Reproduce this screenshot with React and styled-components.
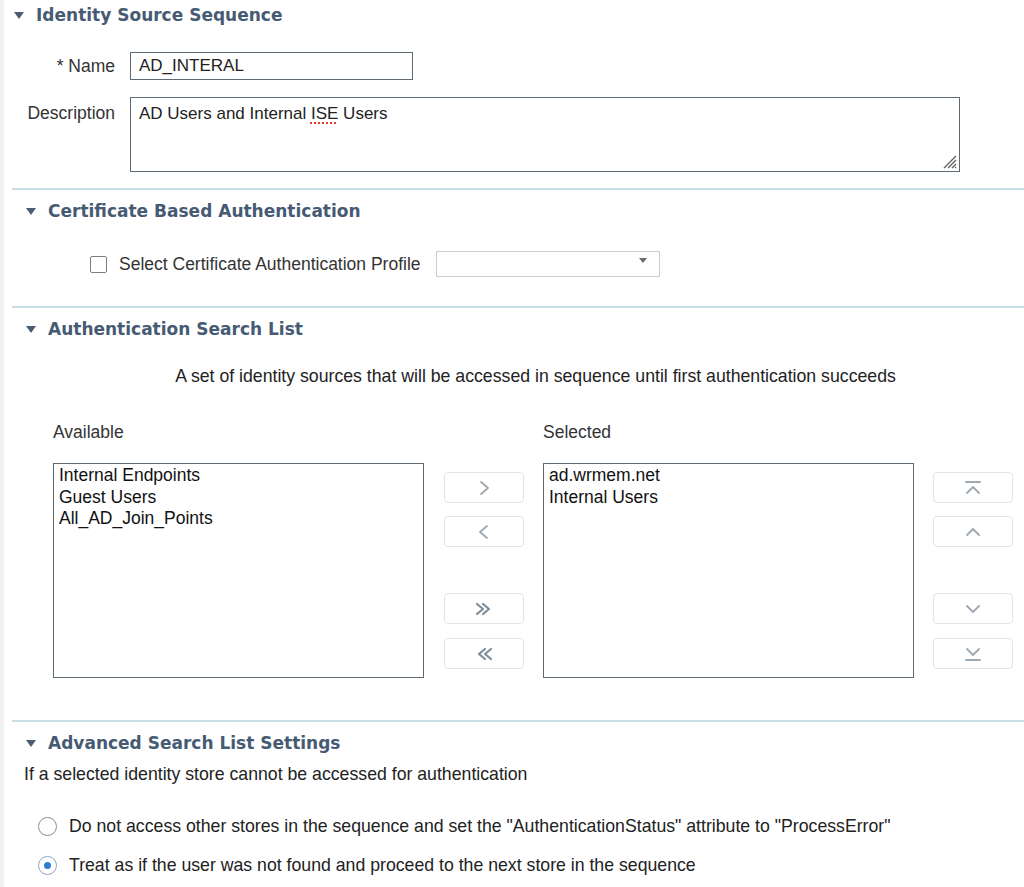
import React from "react";
import styled, { createGlobalStyle } from "styled-components";

const GlobalStyle = createGlobalStyle`
  html, body {
    margin: 0;
    padding: 0;
    background: #ffffff;
  }
  body {
    font-family: "Liberation Sans", Arial, sans-serif;
    color: #222;
  }
`;

const Page = styled.div`
  width: 1024px;
  height: 887px;
  box-sizing: border-box;
  border-left: 4px solid #f1f1f1;
  overflow: hidden;
`;

const Section = styled.section`
  margin-left: 8px;
  border-top: ${(p) => (p.$divider ? "2px solid #c9dee6" : "none")};
  padding-bottom: ${(p) => p.$bottom || 0}px;
`;

const Header = styled.div`
  display: flex;
  align-items: center;
  height: ${(p) => p.$height || 42}px;
  padding-left: ${(p) => p.$indent}px;
  gap: 12px;
`;

const Caret = styled.span`
  width: 0;
  height: 0;
  border-left: 5px solid transparent;
  border-right: 5px solid transparent;
  border-top: 7px solid #4a5d72;
`;

const Title = styled.h2`
  margin: 0;
  font-family: "DejaVu Sans", Verdana, sans-serif;
  font-weight: bold;
  font-size: 17px;
  color: #465b73;
`;

const FormRow = styled.div`
  display: grid;
  grid-template-columns: 103px auto;
  column-gap: 15px;
  align-items: ${(p) => (p.$top ? "start" : "center")};
  margin-top: ${(p) => p.$mt}px;
`;

const Label = styled.label`
  text-align: right;
  font-size: 17.5px;
  line-height: 20px;
  color: #333;
  white-space: nowrap;
  padding-top: ${(p) => (p.$top ? 6 : 0)}px;
`;

const TextBox = styled.div`
  box-sizing: border-box;
  width: ${(p) => p.$w}px;
  height: ${(p) => p.$h}px;
  border: 1px solid #5e6b74;
  background: #fff;
  padding: ${(p) => (p.$multi ? "6px 8px" : "3px 8px")};
  font-size: 17px;
  color: #222;
  position: relative;
  line-height: 20px;
`;

const Misspelled = styled.span`
  text-decoration: underline dotted #e0392d;
  text-underline-offset: 3px;
  text-decoration-thickness: 2px;
`;

const Grip = styled.svg`
  position: absolute;
  right: 2px;
  bottom: 2px;
`;

const CheckRow = styled.div`
  display: flex;
  align-items: center;
  padding-left: 78px;
  height: 26px;
  margin-top: 19px;
  margin-bottom: 29px;
`;

const Checkbox = styled.span`
  width: 15px;
  height: 15px;
  border: 1px solid #7a7f84;
  border-radius: 2px;
  background: #fff;
  margin-right: 12px;
`;

const CheckLabel = styled.span`
  font-size: 17.5px;
  color: #333;
  margin-right: 15px;
`;

const Select = styled.div`
  box-sizing: border-box;
  width: 224px;
  height: 26px;
  border: 1px solid #cfcfcf;
  position: relative;
  background: #fff;
`;

const SelectArrow = styled.span`
  position: absolute;
  right: 12px;
  top: 6px;
  border-left: 4px solid transparent;
  border-right: 4px solid transparent;
  border-top: 5px solid #6b6b6b;
`;

const Intro = styled.p`
  margin: 16px 0 0;
  text-align: center;
  font-size: 17.7px;
  line-height: 20px;
  padding-left: 35px;
  color: #222;
`;

const Shuttle = styled.div`
  display: grid;
  grid-template-columns: 371px 119px 371px 99px;
  margin-top: 36px;
  padding-left: 41px;
`;

const ColumnTitle = styled.div`
  grid-column: span 2;
  font-size: 17.5px;
  line-height: 20px;
  height: 41px;
  color: #333;
`;

const ListBox = styled.ul`
  list-style: none;
  margin: 0;
  box-sizing: border-box;
  height: 215px;
  border: 1px solid #5e6b74;
  padding: 1px 5px;
  font-size: 17.5px;
  line-height: 21.5px;
  color: #111;
`;

const ButtonStack = styled.div`
  display: flex;
  flex-direction: column;
  align-items: flex-start;
  padding-top: 9px;
  padding-left: ${(p) => p.$pl}px;
`;

const MoveButton = styled.button`
  box-sizing: border-box;
  width: 80px;
  height: 31px;
  border: 1px solid #e2e4e6;
  border-radius: 4px;
  background: #fff;
  display: flex;
  align-items: center;
  justify-content: center;
  padding: 0;
  margin-top: ${(p) => p.$mt || 0}px;
`;

const Info = styled.p`
  margin: 0;
  padding-left: 12px;
  font-size: 17.7px;
  line-height: 20px;
  color: #222;
`;

const RadioList = styled.div`
  display: flex;
  flex-direction: column;
  gap: 19px;
  margin-top: 32px;
  padding-left: 26px;
`;

const RadioRow = styled.div`
  display: flex;
  align-items: center;
  gap: 12px;
  height: 20px;
  font-size: 17.7px;
  color: #222;
  white-space: nowrap;
`;

const Radio = styled.span`
  flex: none;
  box-sizing: border-box;
  width: 19px;
  height: 19px;
  border-radius: 50%;
  border: 1.5px solid ${(p) => (p.$on ? "#8aa7c4" : "#8a8f94")};
  background: #fff;
  display: flex;
  align-items: center;
  justify-content: center;
  &::after {
    content: "";
    width: 7px;
    height: 7px;
    border-radius: 50%;
    background: ${(p) => (p.$on ? "#2f7fd0" : "transparent")};
  }
`;

const Glyph = ({ kind }) => {
  const paths = {
    right: "M-3 -6 L4 0 L-3 6",
    left: "M3 -6 L-4 0 L3 6",
    rightAll: "M-7 -5 L-1 0 L-7 5 M-1 -5 L5 0 L-1 5",
    leftAll: "M7 -5 L1 0 L7 5 M1 -5 L-5 0 L1 5",
    top: "M-7 -6 L7 -6 M-6 5 L0 -1 L6 5",
    up: "M-6 3 L0 -3 L6 3",
    down: "M-6 -3 L0 3 L6 -3",
    bottom: "M-7 6 L7 6 M-6 -5 L0 1 L6 -5",
  };
  const heavy = kind === "rightAll" || kind === "leftAll";
  return (
    <svg width="20" height="16" viewBox="-10 -8 20 16">
      <path
        d={paths[kind]}
        fill="none"
        stroke={heavy ? "#7f8d98" : "#9ea8b0"}
        strokeWidth={heavy ? 2.2 : 1.8}
        strokeLinecap="round"
        strokeLinejoin="round"
      />
    </svg>
  );
};

export default function App() {
  return (
    <Page>
      <GlobalStyle />
      <Section $bottom={16}>
        <Header $indent={2} $height={30}>
          <Caret />
          <Title>Identity Source Sequence</Title>
        </Header>
        <FormRow $mt={22}>
          <Label>* Name</Label>
          <TextBox $w={283} $h={28}>AD_INTERAL</TextBox>
        </FormRow>
        <FormRow $mt={17} $top>
          <Label $top>Description</Label>
          <TextBox $w={830} $h={75} $multi>
            AD Users and Internal <Misspelled>ISE</Misspelled> Users
            <Grip width="16" height="16" viewBox="0 0 16 16">
              <path
                d="M15 3 L3 15 M15 7 L7 15 M15 11 L11 15 M15 14 L14 15"
                stroke="#666"
                strokeWidth="1.4"
              />
            </Grip>
          </TextBox>
        </FormRow>
      </Section>

      <Section $divider>
        <Header $indent={14}>
          <Caret />
          <Title>Certificate Based Authentication</Title>
        </Header>
        <CheckRow>
          <Checkbox />
          <CheckLabel>Select Certificate Authentication Profile</CheckLabel>
          <Select>
            <SelectArrow />
          </Select>
        </CheckRow>
      </Section>

      <Section $divider $bottom={42}>
        <Header $indent={14}>
          <Caret />
          <Title>Authentication Search List</Title>
        </Header>
        <Intro>
          A set of identity sources that will be accessed in sequence until first
          authentication succeeds
        </Intro>
        <Shuttle>
          <ColumnTitle>Available</ColumnTitle>
          <ColumnTitle>Selected</ColumnTitle>
          <ListBox>
            <li>Internal Endpoints</li>
            <li>Guest Users</li>
            <li>All_AD_Join_Points</li>
          </ListBox>
          <ButtonStack $pl={20}>
            <MoveButton><Glyph kind="right" /></MoveButton>
            <MoveButton $mt={13}><Glyph kind="left" /></MoveButton>
            <MoveButton $mt={46}><Glyph kind="rightAll" /></MoveButton>
            <MoveButton $mt={14}><Glyph kind="leftAll" /></MoveButton>
          </ButtonStack>
          <ListBox>
            <li>ad.wrmem.net</li>
            <li>Internal Users</li>
          </ListBox>
          <ButtonStack $pl={19}>
            <MoveButton><Glyph kind="top" /></MoveButton>
            <MoveButton $mt={13}><Glyph kind="up" /></MoveButton>
            <MoveButton $mt={46}><Glyph kind="down" /></MoveButton>
            <MoveButton $mt={14}><Glyph kind="bottom" /></MoveButton>
          </ButtonStack>
        </Shuttle>
      </Section>

      <Section $divider>
        <Header $indent={14}>
          <Caret />
          <Title>Advanced Search List Settings</Title>
        </Header>
        <Info>If a selected identity store cannot be accessed for authentication</Info>
        <RadioList>
          <RadioRow>
            <Radio />
            Do not access other stores in the sequence and set the
            "AuthenticationStatus" attribute to "ProcessError"
          </RadioRow>
          <RadioRow>
            <Radio $on />
            Treat as if the user was not found and proceed to the next store in the
            sequence
          </RadioRow>
        </RadioList>
      </Section>
    </Page>
  );
}
